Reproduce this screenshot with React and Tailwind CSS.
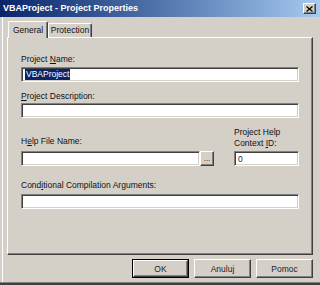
import React from "react";

const raised =
  "bg-[#d4d0c8] border-t border-l border-white border-r border-b border-r-[#404040] border-b-[#404040] shadow-[inset_-1px_-1px_0_#808080]";
const sunken =
  "bg-white border-t border-l border-[#808080] border-r border-b border-r-white border-b-white shadow-[inset_1px_1px_0_#404040,inset_-1px_-1px_0_#d4d0c8]";

function Label({ children, className = "" }) {
  return (
    <div className={"h-[10px] leading-[10px] text-[8.5px] text-[#111] whitespace-nowrap " + className}>
      {children}
    </div>
  );
}

export default function App() {
  return (
    <div
      className="w-[320px] h-[285px] bg-[#d4d0c8] flex flex-col overflow-hidden"
      style={{ fontFamily: '"Liberation Sans", Arial, sans-serif' }}
    >
      {/* Title bar */}
      <div className="h-[17px] shrink-0 flex items-center bg-linear-to-r from-[#0a246a] to-[#a6caf0] pl-[3px] pr-[4px]">
        <span className="text-[9px] font-bold text-white leading-none">VBAProject - Project Properties</span>
        <div className={"ml-auto w-[13px] h-[11px] flex items-center justify-center " + raised}>
          <svg width="7" height="6" viewBox="0 0 7 6">
            <path d="M0.5 0.5 L6.5 5.5 M6.5 0.5 L0.5 5.5" stroke="#000" strokeWidth="1.3" />
          </svg>
        </div>
      </div>

      {/* Body */}
      <div className="flex-1 flex flex-col ml-[2px] border-l border-white pl-[4px] pt-[4px]">
        {/* Tabs */}
        <div className="flex items-end h-[16px] pl-[1px]">
          <div className="relative z-10 -mb-[1px] h-[17px] w-[40px] bg-[#d4d0c8] border-t border-l border-white border-r border-r-[#404040] shadow-[inset_-1px_0_0_#808080] rounded-t-[2px] flex items-start justify-center pt-[3px]">
            <span className="text-[8.5px] leading-[10px] text-[#111]">General</span>
          </div>
          <div className="h-[14px] w-[44px] bg-[#d4d0c8] border-t border-l border-white border-r border-r-[#404040] shadow-[inset_-1px_0_0_#808080] rounded-t-[2px] flex items-start justify-center pt-[1px]">
            <span className="text-[8.5px] leading-[10px] text-[#111]">Protection</span>
          </div>
        </div>

        {/* Panel */}
        <div className={"w-[306px] h-[218px] flex flex-col px-[13px] " + raised}>
          <Label className="mt-[16px]">
            Project <u>N</u>ame:
          </Label>
          <div className={"mt-[3px] h-[15px] w-[278px] flex items-center pl-[3px] " + sunken}>
            <span className="bg-[#0a246a] text-white text-[8.5px] leading-[11px] px-[1px]">VBAProject</span>
          </div>

          <Label className="mt-[9px]">
            <u>P</u>roject Description:
          </Label>
          <div className={"mt-[2px] h-[15px] w-[278px] " + sunken}></div>

          <div className="mt-[9px] flex items-end">
            <div className="flex flex-col">
              <Label>
                H<u>e</u>lp File Name:
              </Label>
              <div className="mt-[5px] flex">
                <div className={"h-[15px] w-[179px] " + sunken}></div>
                <div className={"h-[15px] w-[14px] flex items-end justify-center pb-[2px] " + raised}>
                  <span className="text-[8px] leading-[8px] text-[#111]">...</span>
                </div>
              </div>
            </div>
            <div className="ml-[20px] flex flex-col">
              <div className="text-[8.5px] leading-[11px] text-[#111] whitespace-nowrap">
                Project Help
                <br />
                Context <u>I</u>D:
              </div>
              <div className={"mt-[2px] h-[15px] w-[65px] flex items-center pl-[3px] " + sunken}>
                <span className="text-[8.5px] leading-[10px] text-[#222]">0</span>
              </div>
            </div>
          </div>

          <Label className="mt-[14px]">
            Cond<u>i</u>tional Compilation Arguments:
          </Label>
          <div className={"mt-[4px] h-[15px] w-[278px] " + sunken}></div>
        </div>

        {/* Buttons */}
        <div className="mt-[4px] flex justify-end gap-[5px] pr-[7px]">
          <div className="w-[57px] h-[19px] border border-black">
            <div className={"w-full h-full flex items-center justify-center " + raised}>
              <span className="text-[8.5px] leading-[10px] text-[#222]">OK</span>
            </div>
          </div>
          <div className={"w-[57px] h-[19px] flex items-center justify-center " + raised}>
            <span className="text-[8.5px] leading-[10px] text-[#222]">Anuluj</span>
          </div>
          <div className={"w-[57px] h-[19px] flex items-center justify-center " + raised}>
            <span className="text-[8.5px] leading-[10px] text-[#222]">Pomoc</span>
          </div>
        </div>
      </div>

      {/* bottom frame */}
      <div className="h-[3px] shrink-0 bg-[#404040] border-t border-[#808080]"></div>
    </div>
  );
}
